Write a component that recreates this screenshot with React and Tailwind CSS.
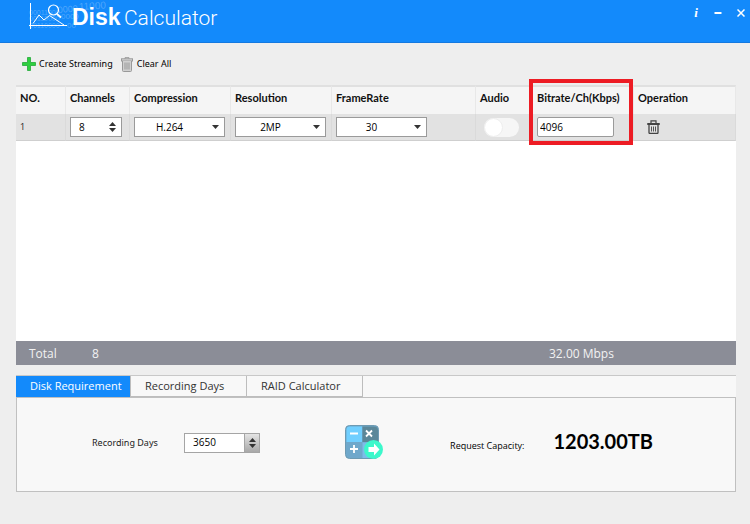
import React, { useState } from "react";

function Logo() {
  return (
    <svg viewBox="0 0 82 30" className="h-[30px] w-[82px] shrink-0" fill="none" aria-hidden="true">
      <g fill="#fff" fillOpacity="0.25" fontFamily="Liberation Sans, sans-serif">
        <text x="1" y="15" fontSize="7">00011000</text>
        <text x="1" y="21" fontSize="7">00110000</text>
        <text x="1" y="28" fontSize="7">00110000</text>
        <text x="30" y="13" fontSize="9" transform="rotate(-5 30 13)">0000</text>
        <text x="51" y="10" fontSize="10" transform="rotate(-3 51 10)">11000</text>
        <text x="33" y="19" fontSize="8">0000</text>
        <text x="39" y="28" fontSize="8">00</text>
      </g>
      <g stroke="#fff">
        <path d="M2.500 3v26M1 25.500h38" strokeWidth="1" />
        <path d="M5 23.500l6-8.500 5 5 5.500-4.500L36 25" strokeWidth="1" />
        <circle cx="25.500" cy="10" r="5" strokeWidth="1.200" />
        <path d="M29 14l4 3.500" strokeWidth="1.800" />
      </g>
    </svg>
  );
}

function PlusIcon() {
  return (
    <svg viewBox="0 0 14 14" className="size-[14px]" aria-hidden="true">
      <path d="M5.500 .5h3v5h5v3h-5v5h-3v-5h-5v-3h5z" fill="#2fcf3f" stroke="#22a838" strokeWidth="0.800" />
    </svg>
  );
}

function GreyBin() {
  return (
    <svg viewBox="0 0 12 15" className="h-[15px] w-[12px]" fill="none" stroke="#999" aria-hidden="true">
      <path d="M4 2V.700h4V2" />
      <rect x="0.500" y="1.800" width="11" height="2.200" fill="#d5d5d5" />
      <path d="M1.500 4v9.500q0 1 1 1h7q1 0 1-1V4" fill="#d0d0d0" />
      <path d="M4 5.500v7M6 5.500v7M8 5.500v7" />
    </svg>
  );
}

function DarkBin() {
  return (
    <svg viewBox="0 0 13 14" className="h-[14px] w-[13px]" fill="none" stroke="#444" aria-hidden="true">
      <path d="M4 3V.800h5V3" strokeWidth="1.200" />
      <path d="M.5 4.500v-1h12v1z" />
      <path d="M2 5v7.500q0 1 1 1h7q1 0 1-1V5" strokeWidth="1.300" />
      <path d="M4.500 6.500v5M6.500 6.500v5M8.500 6.500v5" strokeWidth="0.900" />
    </svg>
  );
}

function CalculatorIcon() {
  return (
    <svg viewBox="0 0 39 35" className="h-[35px] w-[39px]" aria-hidden="true">
      <rect x="0.500" y="0.500" width="33" height="33" rx="4" fill="#6fa8cb" stroke="#6d9ab2" />
      <path d="M1.500 17V4.500q0-3 3-3H17V17z" fill="#70cfff" />
      <path d="M17.500 17V1.500H29q4 0 4 4V17z" fill="#5b8799" />
      <path d="M17.500 17.500H33V29q0 4-4 4H17.500z" fill="#7dbce8" />
      <path d="M5 8.500h8M5 24h8M9 20v8M21 5.500l6 6M27 5.500l-6 6" stroke="#fff" strokeWidth="1.800" />
      <circle cx="28.500" cy="24.500" r="9.500" fill="#3cf8cb" />
      <path d="M23.500 22h5.500v-3.500l5.500 6-5.500 6V27h-5.500z" fill="#fff" />
    </svg>
  );
}

function Triangle({ up = false }) {
  return (
    <svg viewBox="0 0 7 4" className="h-[4px] w-[7px]" fill="#333" aria-hidden="true">
      <path d={up ? "M0 4l3.500-4L7 4z" : "M0 0h7L3.500 4z"} />
    </svg>
  );
}

function Spinner({ id, label, value, onChange, wide }) {
  const number = Number(value) || 0;
  return (
    <div
      className={
        wide
          ? "flex h-5 w-[76px] border border-[#a5a5a5] bg-white"
          : "flex h-5 w-[52px] border border-[#9a9a9a] bg-white"
      }
    >
      <input
        id={id}
        aria-label={label}
        inputMode="numeric"
        value={value}
        onChange={(e) => onChange(e.target.value)}
        className="min-w-0 flex-1 bg-transparent pl-2 text-[10px] text-black outline-none"
      />
      <div
        className={
          "flex flex-col items-center justify-center gap-[2px] " +
          (wide ? "w-[15px] border-l border-[#a5a5a5] bg-linear-to-b from-[#e4e4e4] to-[#a8a8a8]" : "w-[18px]")
        }
      >
        <button type="button" aria-label="Increase" onClick={() => onChange(String(number + 1))}>
          <Triangle up />
        </button>
        <button type="button" aria-label="Decrease" onClick={() => onChange(String(Math.max(0, number - 1)))}>
          <Triangle />
        </button>
      </div>
    </div>
  );
}

function Dropdown({ label, options }) {
  return (
    <div className="relative w-[91px]">
      <select
        aria-label={label}
        className="block h-5 w-full appearance-none border border-[#9a9a9a] bg-white pr-5 text-[10px] text-black outline-none [text-align-last:center]"
      >
        {options.map((o) => (
          <option key={o}>{o}</option>
        ))}
      </select>
      <span className="pointer-events-none absolute top-2 right-[6px]">
        <Triangle />
      </span>
    </div>
  );
}

const columns = ["NO.", "Channels", "Compression", "Resolution", "FrameRate", "Audio", "Bitrate/Ch(Kbps)", "Operation"];
const tabs = ["Disk Requirement", "Recording Days", "RAID Calculator"];

export default function App() {
  const [channels, setChannels] = useState("8");
  const [days, setDays] = useState("3650");
  const [tab, setTab] = useState(0);

  return (
    <div className="flex min-h-screen flex-col bg-[#eeeeee] font-['Open_Sans','Noto_Sans',sans-serif] text-[11px] text-[#222]">
      <header className="flex h-[43px] items-start justify-between border-b border-[#1479e0] bg-[#138afb] pr-1 pl-[28px] text-white">
        <div className="flex items-start">
          <Logo />
          <h1 className="-ml-[38px] pt-[3px] font-['Liberation_Sans',sans-serif] text-[23px] leading-7 font-bold">
            Disk <span className="-ml-[3px] font-['Roboto',sans-serif] text-[21px] font-light">Calculator</span>
          </h1>
        </div>
        <div className="flex items-center gap-[14px] pt-[5px]">
          <button type="button" aria-label="About" className="w-2 font-['Liberation_Serif',serif] text-[13px] leading-4 font-bold italic">
            i
          </button>
          <button type="button" aria-label="Minimize" className="flex h-4 w-[9px] items-center">
            <svg viewBox="0 0 8 8" className="size-2" stroke="#fff" strokeWidth="2">
              <path d="M0.500 4h7" />
            </svg>
          </button>
          <button type="button" aria-label="Close" className="flex h-4 w-[9px] items-center">
            <svg viewBox="0 0 8 8" className="size-2" stroke="#fff" strokeWidth="1.500">
              <path d="M.5 .5l7 7M7.500 .5l-7 7" />
            </svg>
          </button>
        </div>
      </header>

      <main className="flex flex-1 flex-col pr-[14px] pb-8 pl-4">
        <div className="flex h-[42px] items-center gap-2 pl-[6px] font-['Noto_Sans',sans-serif] text-[9px] text-black">
          <button type="button" className="flex items-center gap-[3px]">
            <PlusIcon />
            Create Streaming
          </button>
          <button type="button" className="flex items-center gap-1">
            <GreyBin />
            Clear All
          </button>
        </div>

        <section className="flex-1 bg-white">
          <table className="w-full table-fixed border-separate border-spacing-0">
            <colgroup>
              <col className="w-[50px]" />
              <col className="w-[64px]" />
              <col className="w-[101px]" />
              <col className="w-[101px]" />
              <col />
              <col className="w-[57px]" />
              <col className="w-[101px]" />
              <col className="w-[102px]" />
            </colgroup>
            <thead>
              <tr className="h-[29px] bg-[#f5f5f5] text-left font-['Lato',sans-serif] text-[11px] text-[#111]">
                {columns.map((c, i) => (
                  <th
                    key={c}
                    scope="col"
                    className="relative border-t-2 border-r border-t-[#e0e0e0] border-r-[#e8e8e8] p-0 pb-1 pl-1 font-bold whitespace-nowrap"
                  >
                    {c}
                    {i === 6 && (
                      <span className="pointer-events-none absolute -top-2 -left-1 h-[66px] w-[104px] border-4 border-[#ed1c24]" />
                    )}
                  </th>
                ))}
              </tr>
            </thead>
            <tbody>
              <tr className="h-[27px] bg-[#e2e2e2] [&>td]:border-r [&>td]:border-b [&>td]:border-r-[#dadada] [&>td]:border-b-[#cfcfcf] [&>td]:p-0 [&>td]:pl-1">
                <td className="text-[9px]">1</td>
                <td>
                  <Spinner label="Channels" value={channels} onChange={setChannels} />
                </td>
                <td>
                  <Dropdown label="Compression" options={["H.264", "H.265"]} />
                </td>
                <td>
                  <Dropdown label="Resolution" options={["2MP", "4MP"]} />
                </td>
                <td>
                  <Dropdown label="FrameRate" options={["30", "25"]} />
                </td>
                <td>
                  <label className="ml-1 flex h-[19px] w-[35px] rounded-full bg-[#f6f6f6]">
                    <input type="checkbox" aria-label="Audio" className="peer sr-only" />
                    <span className="size-[19px] rounded-full border border-[#eeeeee] bg-white peer-checked:ml-4" />
                  </label>
                </td>
                <td>
                  <input
                    aria-label="Bitrate/Ch(Kbps)"
                    defaultValue="4096"
                    className="block h-5 w-[77px] rounded-xs border border-[#9a9a9a] bg-white pl-[2px] text-[10px] text-black outline-none"
                  />
                </td>
                <td>
                  <button type="button" aria-label="Delete" className="ml-[9px] block">
                    <DarkBin />
                  </button>
                </td>
              </tr>
            </tbody>
          </table>
        </section>

        <div className="flex h-6 items-center bg-[#8b8d97] pt-[2px] pl-[13px] text-[12px] text-[#f2f2f2]">
          <span className="w-[63px]">Total</span>
          <span className="flex-1">8</span>
          <span className="w-[187px]">32.00 Mbps</span>
        </div>

        <div role="tablist" className="mt-[10px] flex h-[22px] border-t border-[#c8c8c8] bg-[#f8f8f8] text-[11px]">
          {tabs.map((t, i) => (
            <button
              key={t}
              type="button"
              role="tab"
              aria-selected={tab === i}
              onClick={() => setTab(i)}
              className={
                "border-r border-[#bdbdbd] pl-[14px] text-left whitespace-nowrap " +
                (i === 0 ? "w-[115px] " : "w-[116px] ") +
                (tab === i ? "bg-[#138afb] text-white" : "border-b text-[#333]")
              }
            >
              {t}
            </button>
          ))}
        </div>
        <section role="tabpanel" className="flex h-[95px] items-center border border-[#c0c0c0] bg-[#f8f8f8] pr-[82px] pb-1 pl-[75px]">
          <label htmlFor="days" className="w-[92px] font-['Noto_Sans',sans-serif] text-[9px]">
            Recording Days
          </label>
          <Spinner id="days" value={days} onChange={setDays} wide />
          <button type="button" aria-label="Calculate" className="ml-[85px]">
            <CalculatorIcon />
          </button>
          <div className="flex flex-1 items-baseline justify-end gap-[29px] pb-1">
            <span className="text-[9px] text-black">Request Capacity:</span>
            <output className="font-['Lato',sans-serif] text-[20px] leading-6 font-bold text-black">1203.00TB</output>
          </div>
        </section>
      </main>
    </div>
  );
}
